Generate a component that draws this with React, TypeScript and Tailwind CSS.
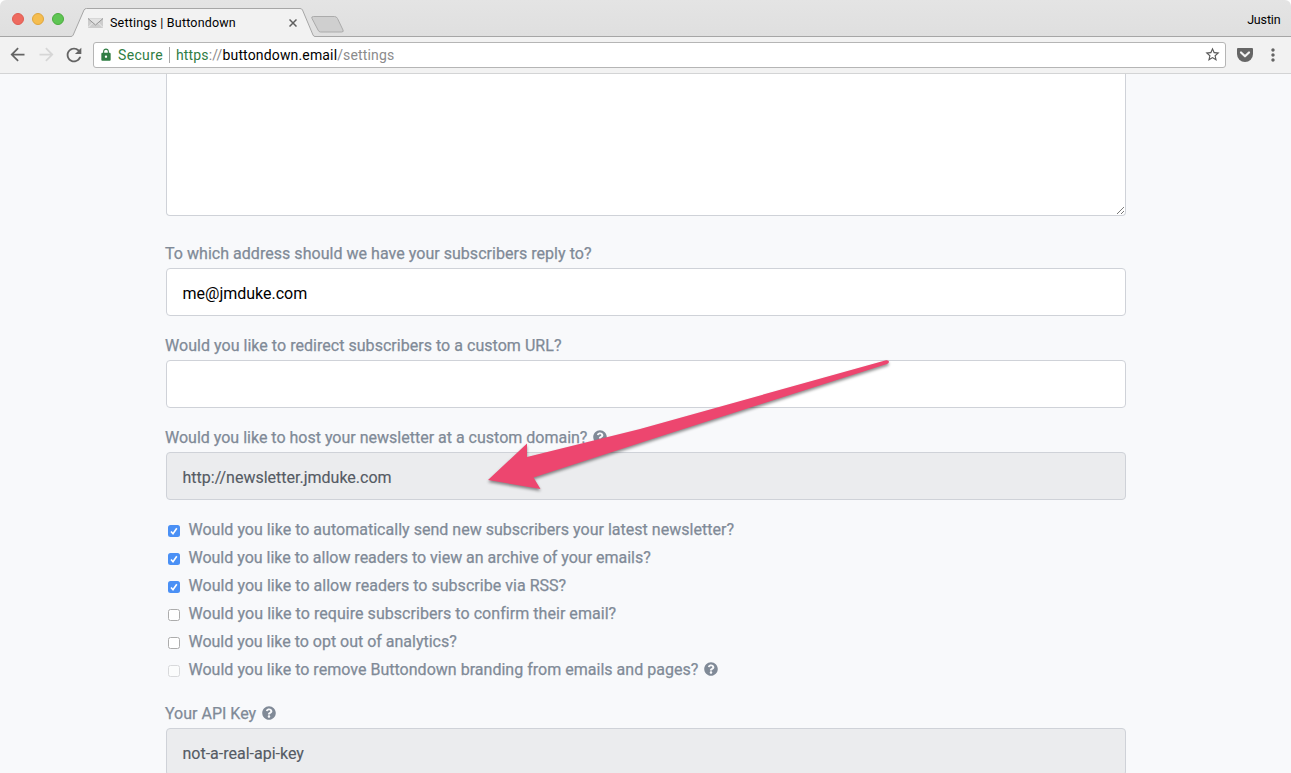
import { FaQuestionCircle } from "react-icons/fa";
import { MdArrowBack, MdArrowForward, MdLock, MdMoreVert, MdRefresh, MdStarBorder } from "react-icons/md";

function TabStrip() {
  return (
    <div className="relative flex h-[37px] shrink-0 items-start rounded-t-md bg-gradient-to-b from-[#e4e4e4] to-[#dfdfdf]">
      <svg className="absolute inset-0 h-[37px] w-full" viewBox="0 0 1291 37" fill="none">
        <path d="M71 37L73 35L84 10Q84.700 8.500 86.500 8.500H300Q301.800 8.500 302.500 10L313 34.500L315 37Z" fill="#f2f2f2" />
        <path d="M0 36.500H71Q72.500 36.500 73.200 35L84 10Q84.700 8.500 86.500 8.500H300Q301.800 8.500 302.500 10L313 35Q313.700 36.500 315 36.500H1291" stroke="#a6a6a6" />
        <path d="M313.500 16.500H334.500Q336.500 16.500 337.500 18.500L343 30Q344 32 341.500 32H320.500Q318.800 32 318 30L312 18.500Q311 16.500 313.500 16.500Z" fill="#cfcfcf" stroke="#ababab" />
      </svg>
      <div className="relative flex items-center gap-2 pl-3 pt-[13px]">
        <span className="size-3 rounded-full border border-[#df5c52] bg-[#ee6a5f]" />
        <span className="size-3 rounded-full border border-[#dfa63d] bg-[#f5bd4f]" />
        <span className="size-3 rounded-full border border-[#4bab3e] bg-[#5ec553]" />
      </div>
      <div className="relative ml-6 mt-[8px] flex h-[28px] w-[212px] items-center pt-px">
        <svg className="h-[10px] w-[15px]" viewBox="0 0 15 10">
          <rect width="15" height="10" fill="#cdcdcd" />
          <path d="M0 9.500L5 4.500M15 9.500L10 4.500" stroke="#ededed" />
          <path d="M0 0.500L7.500 7L15 0.500" fill="#e2e2e2" stroke="#959595" />
        </svg>
        <span className="ml-[7px] text-[12.500px] leading-5 tracking-[0.180px] text-black">Settings | Buttondown</span>
        <svg className="ml-auto mr-[3px] size-2" viewBox="0 0 8 8" fill="none" stroke="#5f5f5f" strokeWidth="1.500">
          <path d="M0.500 0.500L7.500 7.500M7.500 0.500L0.500 7.500" />
        </svg>
      </div>
      <span className="relative ml-auto pr-[10.500px] pt-[10px] text-[12.500px] leading-5 tracking-[-0.150px] text-black">Justin</span>
    </div>
  );
}

function Toolbar() {
  return (
    <div className="flex h-[37px] shrink-0 items-center border-b border-[#d3d4d5] bg-[#f2f2f2]">
      <MdArrowBack className="mb-px ml-[7px] size-[21px] text-[#646464]" />
      <MdArrowForward className="mb-px ml-[8px] size-[21px] text-[#d6d6d6]" />
      <MdRefresh className="mb-px ml-[6px] size-[22px] text-[#646464]" />
      <div className="ml-[8px] flex h-[26px] w-[1133px] items-center rounded-[3px] border border-[#b5b5b5] bg-white text-[14px]">
        <MdLock className="mb-px ml-[5px] size-[14px] text-[#2f7d43]" />
        <span className="ml-[5px] tracking-[0.350px] text-[#2f7d43]">Secure</span>
        <span className="ml-[6px] h-4 w-px bg-[#a9a9a9]" />
        <span className="ml-[6px] tracking-[0.150px] text-[#8b8b8b]">
          <span className="text-[#2f7d43]">https</span>://<span className="text-black">buttondown.email</span>/settings
        </span>
        <MdStarBorder className="mb-px ml-auto mr-[4.500px] size-[17px] text-[#5a5a5a]" />
      </div>
      <svg className="ml-[11px] h-[14px] w-4" viewBox="0 0 16 14">
        <path d="M1 0H15Q16 0 16 1V6A8 8 0 0 1 0 6V1Q0 0 1 0Z" fill="#666666" />
        <path d="M4 4.500L8 8.300L12 4.500" fill="none" stroke="#f2f2f2" strokeWidth="2.200" strokeLinecap="round" strokeLinejoin="round" />
      </svg>
      <MdMoreVert className="ml-[10px] size-5 text-[#646464]" />
    </div>
  );
}

type FieldProps = { label: string; tracking?: string; value?: string; disabled?: boolean; help?: boolean };

function Field({ label, tracking = "tracking-normal", value = "", disabled = false, help = false }: FieldProps) {
  return (
    <div className="mb-4 shrink-0">
      <div className="-ml-px flex h-7 items-center text-[#808a97]">
        <span className={`[-webkit-text-stroke:0.250px_#808a97] ${tracking}`}>{label}</span>
        {help && <FaQuestionCircle className="mb-[2px] ml-[6px] size-[14px]" />}
      </div>
      <div className={disabled
        ? "flex h-12 items-center rounded border border-[#cfd2d8] bg-[#ebecee] px-[15.500px] pt-[3px] text-[#555b64] [-webkit-text-stroke:0.150px_#555b64]"
        : "flex h-12 items-center rounded border border-[#cfd2d8] bg-white px-[15.500px] pt-[3px] text-black"}>
        {value}
      </div>
    </div>
  );
}

type State = "on" | "off" | "disabled";

function Check({ state }: { state: State }) {
  if (state === "on") {
    return (
      <span className="mt-[2px] flex size-3 items-center justify-center rounded-[2.500px] bg-[#4a90f5]">
        <svg className="size-3" viewBox="0 0 12 12" fill="none">
          <path d="M3 6.400L5 8.700L8.800 3.200" stroke="white" strokeWidth="1.600" />
        </svg>
      </span>
    );
  }
  return (
    <span className={state === "off"
      ? "mt-[2px] size-3 rounded-[2.500px] border border-[#acacac] bg-white"
      : "mt-[2px] size-3 rounded-[2.500px] border border-[#d8d9db] bg-[#fbfcfc]"} />
  );
}

const options: { label: string; state: State; tracking: string; help?: boolean }[] = [
  { label: "Would you like to automatically send new subscribers your latest newsletter?", state: "on", tracking: "tracking-[0.020px]" },
  { label: "Would you like to allow readers to view an archive of your emails?", state: "on", tracking: "tracking-[-0.010px]" },
  { label: "Would you like to allow readers to subscribe via RSS?", state: "on", tracking: "tracking-[0.030px]" },
  { label: "Would you like to require subscribers to confirm their email?", state: "off", tracking: "tracking-[0.050px]" },
  { label: "Would you like to opt out of analytics?", state: "off", tracking: "tracking-[-0.010px]" },
  { label: "Would you like to remove Buttondown branding from emails and pages?", state: "disabled", tracking: "tracking-[0.020px]", help: true },
];

export default function App() {
  return (
    <div className="relative flex h-[773px] w-[1291px] flex-col overflow-hidden bg-white font-['Roboto',sans-serif]">
      <TabStrip />
      <Toolbar />
      <main className="flex min-h-0 flex-1 flex-col overflow-hidden bg-[#f8f9fb] pl-[166px] pr-[165px] text-[16px] leading-6">
        <div className="mb-6 flex h-[142px] shrink-0 items-end justify-end rounded-b border border-t-0 border-[#cfd2d8] bg-white">
          <svg className="size-[9px]" viewBox="0 0 9 9" stroke="#505050" strokeDasharray="1.100 0.300">
            <path d="M1 8L8 1M5 8L8 5" />
          </svg>
        </div>
        <Field label="To which address should we have your subscribers reply to?" tracking="tracking-[0.035px]" value="me@jmduke.com" />
        <Field label="Would you like to redirect subscribers to a custom URL?" tracking="tracking-[0.035px]" />
        <Field label="Would you like to host your newsletter at a custom domain?" value="http://newsletter.jmduke.com" disabled help />
        <div className="mb-4 flex shrink-0 flex-col">
          {options.map((o) => (
            <div key={o.label} className="flex h-7 items-center pl-[2px] text-[#808a97]">
              <Check state={o.state} />
              <span className={`ml-[8.500px] [-webkit-text-stroke:0.250px_#808a97] ${o.tracking}`}>{o.label}</span>
              {o.help && <FaQuestionCircle className="mb-[2px] ml-[6px] size-[14px]" />}
            </div>
          ))}
        </div>
        <Field label="Your API Key" value="not-a-real-api-key" disabled help />
      </main>
      <svg className="pointer-events-none absolute left-[480px] top-[350px] h-[150px] w-[420px] drop-shadow-[0px_2px_1.500px_rgba(0,0,0,0.450)]" viewBox="480 350 420 150">
        <path d="M488 480L527 443.500V457L640 429L886 360.200Q888.800 359.800 889 361.800Q889 363.200 887 364L660 436.500L533.500 477.500L540.500 489Z" fill="#ed466f" />
      </svg>
    </div>
  );
}
